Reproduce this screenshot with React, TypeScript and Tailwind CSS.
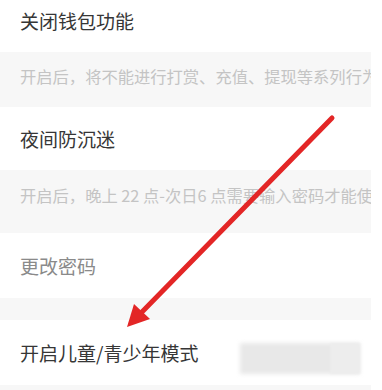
export default function App() {
  const font = { fontFamily: '"Noto Sans CJK SC", "Noto Sans", sans-serif' };

  return (
    <div className="relative w-[382px] h-[390px] overflow-hidden bg-white" style={font}>
      <div className="w-[371px] overflow-hidden -mt-[11px]">
        {/* 关闭钱包功能 */}
        <div className="h-[63px] flex items-center pl-[20px]">
          <span className="text-[19px] leading-none text-[#363636] whitespace-nowrap">关闭钱包功能</span>
        </div>
        <div className="h-[55px] bg-[#f7f7f7] pl-[20px] pt-[13px]">
          <p className="text-[16.3px] leading-[22px] text-[#c4c4c4] whitespace-nowrap">
            开启后，将不能进行打赏、充值、提现等系列行为
          </p>
        </div>

        {/* 夜间防沉迷 */}
        <div className="h-[63px] flex items-center pl-[20px]">
          <span className="text-[19px] leading-none text-[#363636] whitespace-nowrap">夜间防沉迷</span>
        </div>
        <div className="h-[63px] bg-[#f7f7f7] pl-[20px] pt-[14px]">
          <p className="text-[16.3px] leading-[22px] text-[#c4c4c4] whitespace-nowrap">
            开启后，晚上 22 点-次日6 点需要输入密码才能使用
          </p>
        </div>

        {/* 更改密码 */}
        <div className="h-[65px] flex items-center pl-[20px]">
          <span className="text-[19px] leading-none text-[#8a8a8a] whitespace-nowrap">更改密码</span>
        </div>
        <div className="h-[22px] bg-[#f7f7f7]" />

        {/* 开启儿童/青少年模式 */}
        <div className="h-[65px] flex items-center pl-[20px]">
          <span className="text-[19px] leading-none text-[#363636] whitespace-nowrap">开启儿童/青少年模式</span>
        </div>
        <div className="h-[20px] bg-[#f7f7f7]" />
      </div>

      {/* blurred watermark */}
      <div className="absolute left-[240px] top-[343px] w-[120px] h-[31px] bg-[#e8e8e8] blur-[2px]" />
      <div className="absolute left-[330px] top-[343px] w-[30px] h-[31px] bg-[#ededed] blur-[1px]" />

      {/* red annotation arrow */}
      <svg className="absolute inset-0 pointer-events-none" width="382" height="390" viewBox="0 0 382 390">
        <line x1="332" y1="118" x2="140" y2="314" stroke="#e32626" strokeWidth="5" strokeLinecap="round" />
        <polygon points="127,327 134,304 150,319" fill="#e32626" />
      </svg>
    </div>
  );
}
